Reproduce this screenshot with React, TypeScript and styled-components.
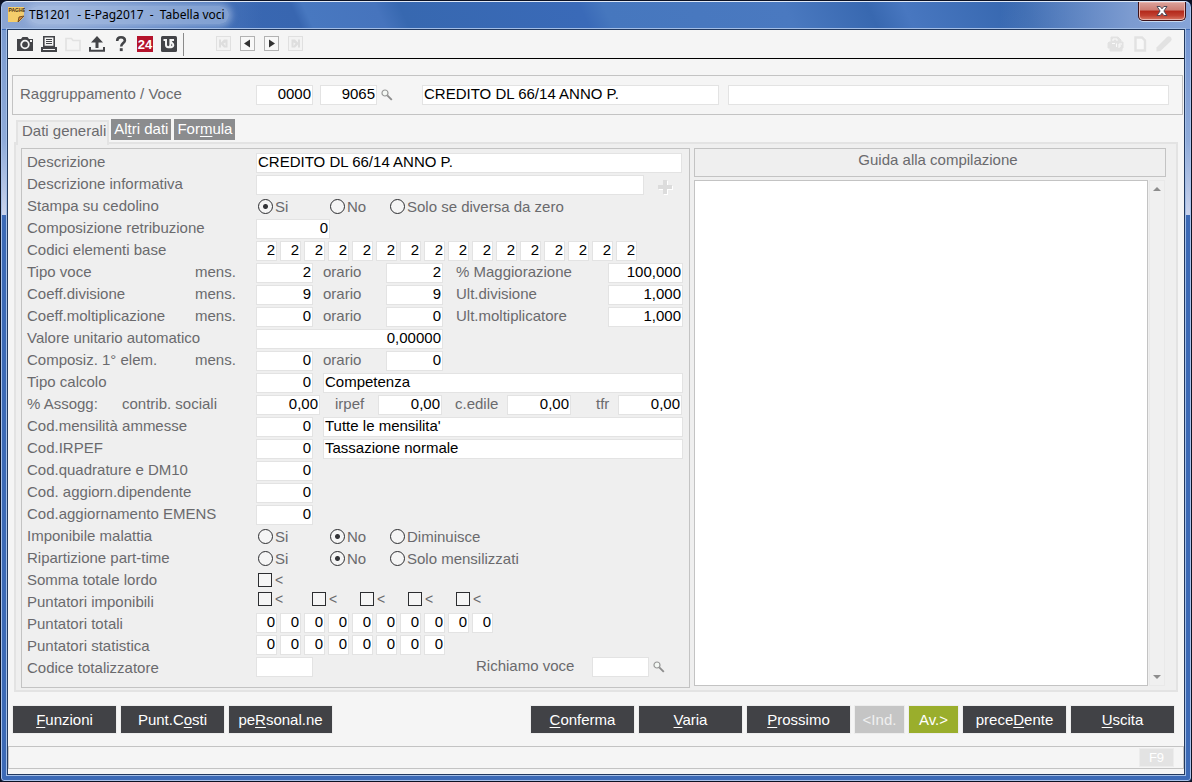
import React from "react";
import styled, { createGlobalStyle, css } from "styled-components";

const Global = createGlobalStyle`
  *, *::before, *::after { box-sizing: border-box; }
  body { margin: 0; background: #0c1224; }
  body, button, input, textarea { font-family: "Liberation Sans", Arial, sans-serif; font-size: 15px; }
`;

const c = {
  page: "#f5f5f5",
  panel: "#efefef",
  line: "#c3c3c3",
  soft: "#e3e3e3",
  label: "#6a6a6d",
  dark: "#414246",
};

/* ---------- window frame ---------- */

const Window = styled.div`
  min-height: 100vh;
  display: flex;
  flex-direction: column;
  padding: 0 6px 6px;
  border: 1px solid #0c1224;
  border-radius: 7px 7px 4px 4px;
  box-shadow: inset 0 0 0 1px #a9c2ea;
  background:
    linear-gradient(#7b9bd0, #8fabd9 60%, #c9d3ec) left 1px top 29px / 6px 185px no-repeat,
    linear-gradient(#7395d2, #8fabd9 60%, #c9d3ec) right 1px top 29px / 6px 185px no-repeat,
    #3c6ab6;
`;

const TitleBar = styled.header`
  height: 28px;
  margin: 0 -5px;
  display: flex;
  align-items: flex-start;
  border-top: 1px solid #dfe8f6;
  border-radius: 6px 6px 0 0;
  background:
    linear-gradient(90deg, #8ba5d3 0, #85a1d2 60px, rgba(90, 130, 195, 0.6) 190px, transparent 260px),
    linear-gradient(270deg, #86a4d8 0, #7c9bd0 60px, transparent 190px),
    linear-gradient(65deg, #3d6dba 0, #3866b0 25%, #4878c0 26%, #4674bd 32%, #3768b0 34%, #3a6ab8 49%,
      #4677be 51%, #4a79c0 66%, #3868b0 73%, #4877c0 76%, #3566ae 86%, #3d6db8 100%);
`;

const AppMark = styled.svg`
  margin: 4px 4px 0 5px;
  flex: none;
`;

const WindowTitle = styled.h1`
  margin: 4px 0 0;
  padding: 0 4px 0 0;
  font: 400 12px/18px "Noto Sans", "Segoe UI", sans-serif;
  color: #000;
  white-space: pre;
  border-radius: 9px;
  background: rgba(190, 208, 236, 0.5);
  box-shadow: 0 0 6px 3px rgba(190, 208, 236, 0.5);
`;

const CloseButton = styled.button`
  width: 48px;
  height: 19px;
  margin: 0 4px 0 auto;
  padding: 0;
  display: grid;
  place-items: center;
  border: 1px solid #3d1219;
  border-top: 0;
  border-radius: 0 0 5px 5px;
  box-shadow: inset 0 0 0 1px #e9b5ae, 0 1px 0 #c9d9f0;
  background: linear-gradient(#dba39c 0, #cd7d73 45%, #b3281a 50%, #c04030 75%, #d97a66 100%);
`;

const Client = styled.main`
  flex: 1;
  display: flex;
  flex-direction: column;
  border: 1px solid #22395f;
  box-shadow: 0 0 0 1px #a3bee6;
  background: ${c.page};
`;

/* ---------- toolbar ---------- */

const Toolbar = styled.div`
  height: 29px;
  display: flex;
  align-items: center;
  gap: 6px;
  padding: 0 11px 0 8px;
  border-bottom: 1px solid #000;
`;

const ToolButton = styled.button`
  width: 18px;
  height: 18px;
  padding: 0;
  display: grid;
  place-items: center;
  border: 0;
  background: none;
`;

const ToolDivider = styled.span`
  width: 1px;
  height: 23px;
  margin: 0 25px 0 -1px;
  background: #8a8a8a;
`;

const Spacer = styled.span`
  flex: 1;
`;

/* ---------- fields ---------- */

const Field = styled.input<{ $w?: number; $right?: boolean; $gap?: number }>`
  height: 20px;
  flex: ${(p) => (p.$w ? `0 0 ${p.$w}px` : "1 1 0")};
  min-width: 0;
  margin: 0 0 0 ${(p) => p.$gap ?? 0}px;
  padding: 0 1px 3px;
  border: 1px solid ${c.soft};
  border-radius: 0;
  outline: 0;
  background: #fff;
  color: #000;
  line-height: 15px;
  text-align: ${(p) => (p.$right ? "right" : "left")};
`;

const HeaderBox = styled.section`
  height: 40px;
  margin: 16px 1px 0 4px;
  padding: 0 13px 0 7px;
  display: flex;
  align-items: center;
  border: 1px solid ${c.line};
`;

const HeaderLabel = styled.label`
  width: 236px;
  flex: none;
  line-height: 20px;
  color: ${c.label};
  padding-bottom: 2px;
`;

const SearchButton = styled.button`
  width: 16px;
  height: 20px;
  margin-left: 2px;
  padding: 0;
  display: grid;
  place-items: center;
  border: 0;
  background: none;
`;

/* ---------- tabs and panel ---------- */

const Tabs = styled.div`
  height: 23px;
  margin: 4px 0 0 8px;
  display: flex;
  align-items: flex-start;
  gap: 3px;
`;

const Tab = styled.button<{ $active?: boolean }>`
  height: 21px;
  padding: 0 3px 2px;
  border: 0;
  line-height: 18px;
  white-space: nowrap;
  background: #8b8c8e;
  color: #fff;
  u { text-underline-offset: 2px; }
  ${(p) =>
    p.$active &&
    css`
      height: 25px;
      margin: 1px -1px 0 0;
      padding: 0 1px 5px 4px;
      border: 2px solid ${c.soft};
      border-bottom: 0;
      background: ${c.panel};
      color: ${c.label};
      z-index: 1;
    `}
`;

const Panel = styled.div`
  flex: 1;
  margin: 0 6px 0 6px;
  padding: 4px 10px 2px 5px;
  display: flex;
  gap: 4px;
  border: 2px solid ${c.soft};
  background: ${c.panel};
`;

const Form = styled.form`
  flex: 0 0 669px;
  padding: 2px 6px 8px 5px;
  border: 1px solid ${c.line};
`;

const Row = styled.div<{ $top?: boolean }>`
  height: 22px;
  display: flex;
  align-items: ${(p) => (p.$top ? "flex-start" : "flex-end")};
`;

const Label = styled.label<{ $w?: number; $gap?: number; $short?: boolean }>`
  flex: 0 0 ${(p) => p.$w ?? 229}px;
  margin-left: ${(p) => p.$gap ?? 0}px;
  line-height: ${(p) => (p.$short ? 18 : 22)}px;
  color: ${c.label};
  white-space: nowrap;
`;

const Cells = styled.div`
  display: flex;
  gap: 3px;
`;

const Choice = styled.label<{ $w: number }>`
  height: 22px;
  flex: 0 0 ${(p) => p.$w}px;
  display: flex;
  align-items: center;
  gap: 2px;
  padding-left: 2px;
  color: ${c.label};
  white-space: nowrap;
`;

const Radio = styled.input`
  appearance: none;
  width: 15px;
  height: 15px;
  flex: none;
  margin: 0;
  border: 1px solid #2c2d30;
  border-radius: 50%;
  background: ${c.page};
  &:checked {
    background: radial-gradient(circle, #333438 0 2px, ${c.page} 3px);
  }
`;

const Check = styled(Radio)`
  width: 14px;
  height: 14px;
  margin-right: 1px;
  border-radius: 0;
`;

const Mark = styled.span`
  font-size: 14px;
  line-height: 16px;
`;

const CheckRow = styled(Row)`
  align-items: flex-start;
  ${Choice} { height: 16px; }
`;

const AddButton = styled.button`
  width: 34px;
  height: 16px;
  margin-left: 4px;
  padding: 0;
  display: grid;
  place-items: center;
  border: 0;
  background: none;
`;

const Guide = styled.section`
  flex: 1;
  min-width: 0;
  display: flex;
  flex-direction: column;
  gap: 3px;
`;

const GuideTitle = styled.h2`
  height: 29px;
  margin: 0;
  padding-left: 16px;
  border: 1px solid ${c.line};
  font-size: 15px;
  font-weight: 400;
  line-height: 22px;
  text-align: center;
  color: ${c.label};
`;

const GuideBody = styled.div`
  flex: 1;
  display: flex;
  margin-bottom: 2px;
`;

const GuideText = styled.textarea`
  flex: 1;
  min-width: 0;
  padding: 2px;
  border: 1px solid ${c.line};
  border-radius: 0;
  outline: 0;
  resize: none;
  overflow: hidden;
  background: #fff;
`;

const ScrollTrack = styled.div`
  width: 16px;
  margin: 0 1px;
  display: flex;
  flex-direction: column;
  justify-content: space-between;
  border: 1px solid #e9e9e9;
  background: #f0f0f0;
`;

const ScrollButton = styled.button`
  height: 16px;
  padding: 0;
  display: grid;
  place-items: center;
  border: 0;
  background: none;
`;

/* ---------- footer ---------- */

const Actions = styled.div`
  margin: 14px 10px 0 5px;
  display: flex;
  gap: 5px;
`;

const Action = styled.button<{ $tone?: "green" | "off" }>`
  width: ${(p) => (p.$tone ? 49 : 103)}px;
  height: 27px;
  padding: 0;
  border: 0;
  white-space: nowrap;
  color: ${(p) => (p.$tone === "off" ? "#f0f0f0" : "#fff")};
  background: ${(p) => (p.$tone === "green" ? "#9aae2c" : p.$tone === "off" ? "#c5c5c5" : c.dark)};
  box-shadow: 0 0 0 1px #ededed;
  u { text-underline-offset: 2px; }
`;

const StatusBar = styled.footer`
  height: 23px;
  margin: 13px 0 5px;
  padding: 0 9px 0 0;
  display: flex;
  align-items: center;
  justify-content: flex-end;
  border: 1px solid ${c.line};
`;

const KeyButton = styled.button`
  width: 35px;
  height: 19px;
  padding: 0 0 1px;
  border: 1px solid #ececec;
  background: ${c.soft};
  color: #fff;
  font-size: 13px;
`;

/* ---------- drawings ---------- */

const ink = "#434448";
const pale = "#e2e2e2";

const I = ({ children, label }: { children: React.ReactNode; label: string }) => (
  <ToolButton type="button" aria-label={label}>
    <svg width="18" height="18" viewBox="0 0 18 18">{children}</svg>
  </ToolButton>
);

const Nav = ({ d, label, off }: { d: string; label: string; off?: boolean }) => (
  <I label={label}>
    <rect x="1.5" y="1.5" width="14" height="14" fill={off ? "#f3f3f3" : "#f8f8f8"} stroke={off ? "#e0e0e0" : "#b2b2b2"} />
    <path d={d} fill={off ? "#dedede" : "#333"} />
  </I>
);

const Lens = () => (
  <svg width="12" height="12" viewBox="0 0 12 12" fill="none">
    <circle cx="4" cy="4" r="3" fill="#f4f8f4" stroke="#989898" strokeWidth="1.2" />
    <path d="M6.3 6.3L10.8 10.8" stroke="#8d8d8d" strokeWidth="1.9" />
  </svg>
);

/* ---------- parts of the form ---------- */

const Num = ({ id, v, w = 57, gap }: { id: string; v: string; w?: number; gap?: number }) => (
  <Field id={id} aria-label={id} defaultValue={v} $w={w} $gap={gap} $right />
);

const Digits = ({ name, n, v }: { name: string; n: number; v: string }) => (
  <Cells>
    {Array.from({ length: n }, (_, i) => (
      <Field key={i} id={i === 0 ? name : undefined} aria-label={`${name} ${i + 1}`} defaultValue={v} $w={21} $right />
    ))}
  </Cells>
);

const Options = ({ name, on, last }: { name: string; on: number; last: string }) => (
  <>
    {["Si", "No", last].map((t, i) => (
      <Choice key={t} $w={[72, 60, 200][i]}>
        <Radio type="radio" name={name} defaultChecked={i === on} />
        {t}
      </Choice>
    ))}
  </>
);

const Pair = ({ label, id, a, b, extra, value }: { label: string; id: string; a: string; b: string; extra?: string; value?: string }) => (
  <Row>
    <Label as="span" $w={168}>{label}</Label>
    <Label htmlFor={`${id}-mens`} $w={61}>mens.</Label>
    <Num id={`${id}-mens`} v={a} />
    <Label htmlFor={`${id}-orario`} $w={63} $gap={10}>orario</Label>
    <Num id={`${id}-orario`} v={b} />
    {extra && (
      <>
        <Label htmlFor={`${id}-extra`} $w={152} $gap={13}>{extra}</Label>
        <Num id={`${id}-extra`} v={value ?? ""} w={75} />
      </>
    )}
  </Row>
);

const Code = ({ label, id, text }: { label: string; id: string; text?: string }) => (
  <Row>
    <Label htmlFor={id}>{label}</Label>
    <Num id={id} v="0" />
    {text && <Field aria-label={`${label} descrizione`} defaultValue={text} $w={360} $gap={10} />}
  </Row>
);

export default function App() {
  return (
    <>
      <Global />
      <Window>
        <TitleBar>
          <AppMark width="18" height="18" viewBox="0 0 18 18">
            <path d="M1 1H17V11L12 16H1Z" fill="#f5cd6b" />
            <path d="M11 16L12 11L17 10Z" fill="#e08a35" stroke="#5c3a16" strokeWidth="0.8" />
            <text x="1.5" y="5.5" fontSize="5" fontWeight="700" fill="#4a3016" fontFamily="Liberation Sans, sans-serif">PAGHE</text>
          </AppMark>
          <WindowTitle>{"TB1201  - E-Pag2017  -  Tabella voci"}</WindowTitle>
          <CloseButton type="button" aria-label="Chiudi">
            <svg width="14" height="12" viewBox="0 0 14 12">
              <path d="M2 1.5H5.2L7 3.8L8.8 1.5H12L8.9 6L12 10.5H8.8L7 8.2L5.2 10.5H2L5.1 6Z" fill="#fff" stroke="#4c4856" />
            </svg>
          </CloseButton>
        </TitleBar>

        <Client>
          <Toolbar>
            <I label="Cattura">
              <path d="M1 4H5L6.5 2H11.5L13 4H17V16H1Z" fill={ink} />
              <circle cx="9" cy="9.5" r="3.8" fill="none" stroke="#f5f5f5" strokeWidth="1.8" />
              <rect x="14" y="5" width="2" height="2" fill="#f5f5f5" />
            </I>
            <I label="Stampa">
              <path d="M3.8 1.8H14.2V11.5H3.8Z" fill="#f5f5f5" stroke={ink} strokeWidth="1.6" />
              <path d="M6 4.5H12M6 6.5H12M6 8.5H12" stroke={ink} />
              <path d="M1 12H17V17H1Z" fill={ink} />
              <path d="M3 14.5H15" stroke="#f5f5f5" />
            </I>
            <I label="Apri">
              <path d="M2 15.5V3.5H7.5L9 5.5H16V15.5Z" fill="none" stroke={pale} strokeWidth="1.6" />
            </I>
            <I label="Esporta">
              <path d="M9 1L15 7.5H10.5V13H7.5V7.5H3Z" fill={ink} />
              <path d="M2 12V15.8H16V12" fill="none" stroke={ink} strokeWidth="2" />
            </I>
            <I label="Aiuto">
              <path d="M5.2 6C5.2 3.4 6.8 2.2 9 2.2C11.4 2.2 12.9 3.5 12.9 5.4C12.9 8 9.2 8.3 9.2 11.6" fill="none" stroke={ink} strokeWidth="2.6" />
              <rect x="7.8" y="13.2" width="2.9" height="2.9" fill={ink} />
            </I>
            <I label="24">
              <rect x="1" y="1" width="16" height="16" fill="#b5132c" />
              <text x="9" y="13.5" textAnchor="middle" fontSize="13" fontWeight="700" fill="#fff" fontFamily="Liberation Sans, sans-serif">24</text>
            </I>
            <I label="Servizi">
              <rect x="1" y="1" width="16" height="16" rx="1.5" fill={ink} />
              <path d="M3.5 5H6V9.8C6 13 10.4 13 10.4 9.8V5H14M10.6 5.4C10.8 8.4 13.6 7.6 13.3 10.3C13.1 12 11 12.6 8.6 12.1" fill="none" stroke="#f5f5f5" strokeWidth="2" />
            </I>
            <ToolDivider />
            <Nav off label="Primo" d="M4 4.5H6V7.5L9 4.5H12.5V12.5H10.5V7.5L8.5 8.5L10.5 11V12.5H9L6 9.5V12.5H4Z" />
            <Nav label="Precedente" d="M5 8.5L11 4.5V12.5Z" />
            <Nav label="Successivo" d="M12 8.5L6 4.5V12.5Z" />
            <Nav off label="Ultimo" d="M13 4.5H11V7.5L8 4.5H4.5V12.5H6.5V7.5L8.5 8.5L6.5 11V12.5H8L11 9.5V12.5H13Z" />
            <Spacer />
            <I label="Stampa PDF">
              <path d="M4 7V2H11L14 5V7M2 7H16V13H15V16H3V13H1V8Z" fill={pale} stroke={pale} />
              <path d="M6 6V4H10V6M5 8.5H8M9.5 12V8.5M12 13V9H15M12 11H14" fill="none" stroke="#fafafa" />
            </I>
            <I label="Nuovo">
              <path d="M4.5 2.5H11L14 5.5V15.5H4.5Z" fill="#f8f8f8" stroke={pale} strokeWidth="2.4" />
            </I>
            <I label="Modifica">
              <path d="M1.5 12.5L12 2Q14 0.5 15.5 2L16 2.5Q17.5 4 16 6L5.5 16L1.5 16.5Z" fill={pale} />
            </I>
          </Toolbar>

          <HeaderBox>
            <HeaderLabel htmlFor="raggruppamento">Raggruppamento / Voce</HeaderLabel>
            <Field id="raggruppamento" defaultValue="0000" $w={57} $right />
            <Field aria-label="Voce" defaultValue="9065" $w={57} $gap={7} $right />
            <SearchButton type="button" aria-label="Cerca voce"><Lens /></SearchButton>
            <Field aria-label="Descrizione voce" defaultValue="CREDITO DL 66/14 ANNO P." $w={297} $gap={27} />
            <Field aria-label="Note voce" $gap={9} />
          </HeaderBox>

          <Tabs role="tablist">
            <Tab type="button" role="tab" aria-selected $active>Dati <u>g</u>enerali</Tab>
            <Tab type="button" role="tab">Al<u>t</u>ri dati</Tab>
            <Tab type="button" role="tab">For<u>m</u>ula</Tab>
          </Tabs>

          <Panel>
            <Form>
              <Row>
                <Label htmlFor="descrizione">Descrizione</Label>
                <Field id="descrizione" defaultValue="CREDITO DL 66/14 ANNO P." $w={426} />
              </Row>
              <Row>
                <Label htmlFor="informativa">Descrizione informativa</Label>
                <Field id="informativa" $w={388} />
                <AddButton type="button" aria-label="Aggiungi">
                  <svg width="16" height="16" viewBox="0 0 16 16">
                    <path d="M7 2H11V7H16V11H11V16H7V11H2V7H7Z" fill="#fff" />
                    <path d="M6 1H10V6H15V10H10V15H6V10H1V6H6Z" fill="#dcdcdc" />
                  </svg>
                </AddButton>
              </Row>
              <Row>
                <Label as="span">Stampa su cedolino</Label>
                <Options name="stampa" on={0} last="Solo se diversa da zero" />
              </Row>
              <Row>
                <Label htmlFor="composizione">Composizione retribuzione</Label>
                <Num id="composizione" v="0" w={74} />
              </Row>
              <Row>
                <Label htmlFor="codici-base">Codici elementi base</Label>
                <Digits name="codici-base" n={16} v="2" />
              </Row>
              <Pair id="tipo-voce" label="Tipo voce" a="2" b="2" extra="% Maggiorazione" value="100,000" />
              <Pair id="divisione" label="Coeff.divisione" a="9" b="9" extra="Ult.divisione" value="1,000" />
              <Pair id="moltiplicazione" label="Coeff.moltiplicazione" a="0" b="0" extra="Ult.moltiplicatore" value="1,000" />
              <Row>
                <Label htmlFor="valore-unitario">Valore unitario automatico</Label>
                <Num id="valore-unitario" v="0,00000" w={187} />
              </Row>
              <Pair id="primo-elemento" label="Composiz. 1° elem." a="0" b="0" />
              <Code id="tipo-calcolo" label="Tipo calcolo" text="Competenza" />
              <Row>
                <Label as="span" $w={95}>% Assogg:</Label>
                <Label htmlFor="contributi" $w={134}>contrib. sociali</Label>
                <Num id="contributi" v="0,00" w={64} />
                <Label htmlFor="irpef" $w={43} $gap={15}>irpef</Label>
                <Num id="irpef" v="0,00" w={64} />
                <Label htmlFor="edile" $w={52} $gap={13}>c.edile</Label>
                <Num id="edile" v="0,00" w={64} />
                <Label htmlFor="tfr" $w={22} $gap={25}>tfr</Label>
                <Num id="tfr" v="0,00" w={64} />
              </Row>
              <Code id="mensilita" label="Cod.mensilità ammesse" text="Tutte le mensilita'" />
              <Code id="cod-irpef" label="Cod.IRPEF" text="Tassazione normale" />
              <Code id="quadrature" label="Cod.quadrature e DM10" />
              <Code id="dipendente" label="Cod. aggiorn.dipendente" />
              <Code id="emens" label="Cod.aggiornamento EMENS" />
              <Row>
                <Label as="span">Imponibile malattia</Label>
                <Options name="malattia" on={1} last="Diminuisce" />
              </Row>
              <Row>
                <Label as="span">Ripartizione part-time</Label>
                <Options name="part-time" on={1} last="Solo mensilizzati" />
              </Row>
              <Row>
                <Label as="span">Somma totale lordo</Label>
                <Choice $w={54}>
                  <Check type="checkbox" />
                  <Mark>&lt;</Mark>
                </Choice>
              </Row>
              <CheckRow>
                <Label as="span">Puntatori imponibili</Label>
                {[54, 48, 48, 48, 48].map((w, i) => (
                  <Choice key={i} $w={w}>
                    <Check type="checkbox" />
                    <Mark>&lt;</Mark>
                  </Choice>
                ))}
              </CheckRow>
              <Row $top>
                <Label htmlFor="totali">Puntatori totali</Label>
                <Digits name="totali" n={10} v="0" />
              </Row>
              <Row $top>
                <Label htmlFor="statistica">Puntatori statistica</Label>
                <Digits name="statistica" n={8} v="0" />
              </Row>
              <Row $top>
                <Label htmlFor="totalizzatore">Codice totalizzatore</Label>
                <Field id="totalizzatore" $w={57} />
                <Label htmlFor="richiamo" $w={116} $gap={163} $short>Richiamo voce</Label>
                <Field id="richiamo" $w={57} />
                <SearchButton type="button" aria-label="Cerca richiamo"><Lens /></SearchButton>
              </Row>
            </Form>

            <Guide>
              <GuideTitle>Guida alla compilazione</GuideTitle>
              <GuideBody>
                <GuideText aria-label="Guida alla compilazione" readOnly />
                <ScrollTrack>
                  <ScrollButton type="button" aria-label="Scorri su">
                    <svg width="8" height="5" viewBox="0 0 8 5"><path d="M4 0L8 4H0Z" fill="#8d8d8d" /></svg>
                  </ScrollButton>
                  <ScrollButton type="button" aria-label="Scorri giù">
                    <svg width="8" height="5" viewBox="0 0 8 5"><path d="M0 0H8L4 4Z" fill="#8d8d8d" /></svg>
                  </ScrollButton>
                </ScrollTrack>
              </GuideBody>
            </Guide>
          </Panel>

          <Actions>
            <Action type="button"><u>F</u>unzioni</Action>
            <Action type="button">Punt.C<u>o</u>sti</Action>
            <Action type="button">pe<u>R</u>sonal.ne</Action>
            <Spacer />
            <Action type="button"><u>C</u>onferma</Action>
            <Action type="button"><u>V</u>aria</Action>
            <Action type="button"><u>P</u>rossimo</Action>
            <Action type="button" $tone="off">&lt;Ind.</Action>
            <Action type="button" $tone="green">Av.&gt;</Action>
            <Action type="button">prece<u>D</u>ente</Action>
            <Action type="button"><u>U</u>scita</Action>
          </Actions>

          <StatusBar>
            <KeyButton type="button">F9</KeyButton>
          </StatusBar>
        </Client>
      </Window>
    </>
  );
}
